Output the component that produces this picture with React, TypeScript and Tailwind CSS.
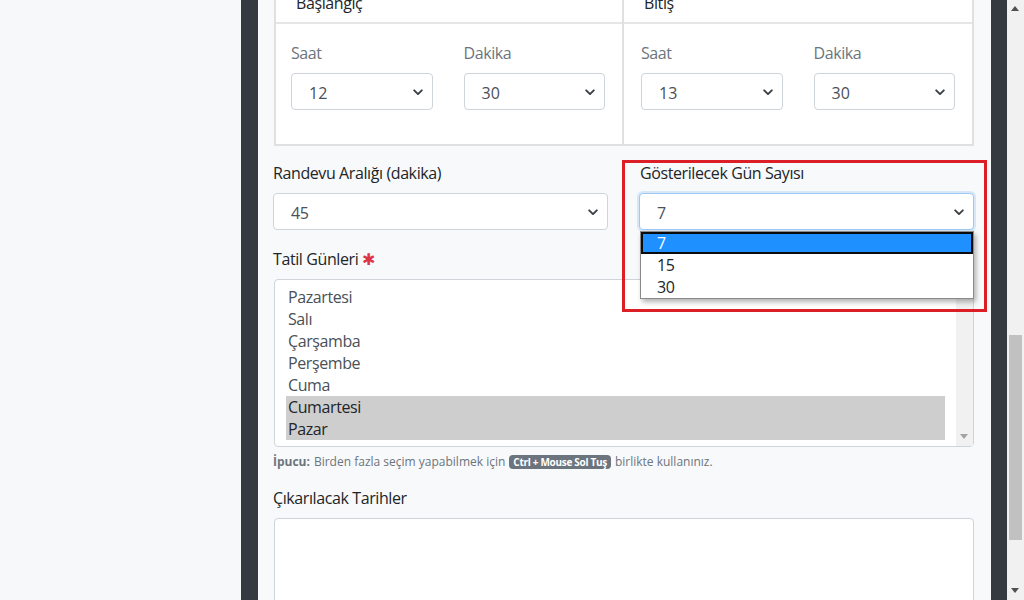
import React from "react";

const FONT = { fontFamily: '"Open Sans", "Noto Sans", sans-serif' };

function Chevron() {
  return (
    <svg width="10" height="7" viewBox="0 0 10 7" className="shrink-0">
      <path d="M1.2 1.3L5 5.1l3.8-3.8" fill="none" stroke="#3a3f44" strokeWidth="1.9" strokeLinecap="round" strokeLinejoin="round" />
    </svg>
  );
}

function FakeSelect({ value, focused = false }: { value: string; focused?: boolean }) {
  return (
    <div
      className={
        "flex h-[37px] items-center justify-between rounded-[4px] border bg-white pl-[17px] pr-[9px] pt-[2px] text-[16px] text-[#495057] " +
        (focused
          ? "border-[#9ccaf5] shadow-[0_0_0_2px_rgba(120,180,240,0.25)]"
          : "border-[#ced4da]")
      }
    >
      <span>{value}</span>
      <Chevron />
    </div>
  );
}

function TimeColumn({ title, hour, minute, last = false }: { title: string; hour: string; minute: string; last?: boolean }) {
  return (
    <div className={"flex flex-col " + (last ? "" : "border-r-2 border-[#e0e0e0]")}>
      <div className="flex h-[42px] items-center border-b-2 border-[#e6e6e6] pl-[20px] text-[16px] tracking-[-0.4px] text-[#212529]">
        <span className="mt-[2px]">{title}</span>
      </div>
      <div className={"grid grid-cols-2 gap-x-[31px] pb-[34px] pt-[17px] " + (last ? "pl-[17px] pr-[17px]" : "pl-[15px] pr-[17px]")}>
        <div>
          <div className="h-[24px] text-[16px] leading-[24px] tracking-[-0.4px] text-[#6c757d]">Saat</div>
          <div className="mt-[8px]">
            <FakeSelect value={hour} />
          </div>
        </div>
        <div>
          <div className="h-[24px] text-[16px] leading-[24px] tracking-[-0.4px] text-[#6c757d]">Dakika</div>
          <div className="mt-[8px]">
            <FakeSelect value={minute} />
          </div>
        </div>
      </div>
    </div>
  );
}

const days = ["Pazartesi", "Salı", "Çarşamba", "Perşembe", "Cuma", "Cumartesi", "Pazar"];

export default function App() {
  return (
    <div className="flex h-[600px] w-[1024px] overflow-hidden bg-[#f7f8fa]" style={FONT}>
      <div className="w-[241px] shrink-0 bg-[#f7f8fa]" />
      <div className="w-[17px] shrink-0 bg-[#343a40]" />
      <div className="relative w-[733px] shrink-0 bg-[#f8f9fa] pl-[15px] pr-[17px]">
        {/* time card */}
        <div className="ml-[1px] mt-[-18px] grid grid-cols-2 border-2 border-t-0 border-[#e0e0e0] bg-white">
          <TimeColumn title="Başlangıç" hour="12" minute="30" />
          <TimeColumn title="Bitiş" hour="13" minute="30" last />
        </div>

        <div className="mt-[15px] grid grid-cols-2 gap-x-[31px] tracking-[-0.4px]">
          <div>
            <div className="h-[24px] text-[16px] leading-[24px] text-[#212529]">Randevu Aralığı (dakika)</div>
            <div className="mt-[8px]">
              <FakeSelect value="45" />
            </div>
          </div>
          <div className="relative">
            <div className="h-[24px] pl-[1px] text-[16px] leading-[24px] text-[#212529]">Gösterilecek Gün Sayısı</div>
            <div className="mt-[8px]">
              <FakeSelect value="7" focused />
            </div>
            {/* native dropdown popup */}
            <div className="absolute left-[1px] right-0 top-[70px] z-10 border border-[#8a8a8a] bg-white text-[16px] text-[#212529] shadow-[2px_3px_5px_rgba(0,0,0,0.3)]">
              <div className="flex h-[22px] items-center border-2 border-[#0b0b0b] bg-[#1e90ff] pl-[14px] text-white">7</div>
              <div className="flex h-[22px] items-center pl-[16px]">15</div>
              <div className="flex h-[22px] items-center pl-[16px]">30</div>
            </div>
          </div>
        </div>

        <div className="mt-[17px] flex h-[24px] items-center text-[16px] leading-[24px] tracking-[-0.4px] text-[#212529]">
          <span>Tatil Günleri</span>
          <span className="ml-[4px] text-[#dc3545]">✱</span>
        </div>
        <div className="ml-[1px] mt-[8px] flex h-[168px] rounded-[4px] border border-[#ced4da] bg-white">
          <div className="flex-1 pl-[11px] pr-[11px] pt-[6px] tracking-[-0.4px]">
            {days.map((d, i) => (
              <div
                key={d}
                className={
                  "flex h-[22px] items-center pl-[2px] text-[16px] " +
                  (i >= 5 ? "bg-[#cecece] text-[#212529]" : "text-[#495057]")
                }
              >
                {d}
              </div>
            ))}
          </div>
          <div className="relative w-[17px] bg-[#f1f1f1]">
            <svg width="8" height="5" viewBox="0 0 8 5" className="absolute bottom-[7px] left-[4px]">
              <path d="M0 0h8L4 5z" fill="#a3a3a3" />
            </svg>
          </div>
        </div>

        <div className="mt-[6px] flex h-[18px] items-center text-[12px] text-[#6c757d]">
          <span className="font-bold">İpucu:</span>
          <span className="ml-[4px]">Birden fazla seçim yapabilmek için</span>
          <span className="ml-[4px] rounded-[4px] bg-[#6c757d] px-[4px] text-[10px] font-bold leading-[14px] tracking-[-0.3px] text-white">Ctrl + Mouse Sol Tuş</span>
          <span className="ml-[4px]">birlikte kullanınız.</span>
        </div>

        <div className="mt-[15px] h-[24px] text-[16px] leading-[24px] tracking-[-0.4px] text-[#212529]">Çıkarılacak Tarihler</div>
        <div className="ml-[1px] mt-[8px] h-[120px] rounded-[4px] border border-[#ced4da] bg-white" />

        {/* red highlight box */}
        <div className="pointer-events-none absolute left-[364px] top-[160px] h-[152px] w-[365px] border-[3px] border-[#dc1f26]" />
      </div>
      <div className="w-[16px] shrink-0 bg-[#343a40]" />
      <div className="relative w-[17px] shrink-0 bg-[#f1f1f1]">
        <svg width="8" height="5" viewBox="0 0 8 5" className="absolute left-[4px] top-[6px]">
          <path d="M0 5h8L4 0z" fill="#505050" />
        </svg>
        <div className="absolute left-[2px] right-[2px] top-[335px] h-[205px] bg-[#c1c1c1]" />
        <svg width="8" height="5" viewBox="0 0 8 5" className="absolute bottom-[7px] left-[4px]">
          <path d="M0 0h8L4 5z" fill="#505050" />
        </svg>
      </div>
    </div>
  );
}
